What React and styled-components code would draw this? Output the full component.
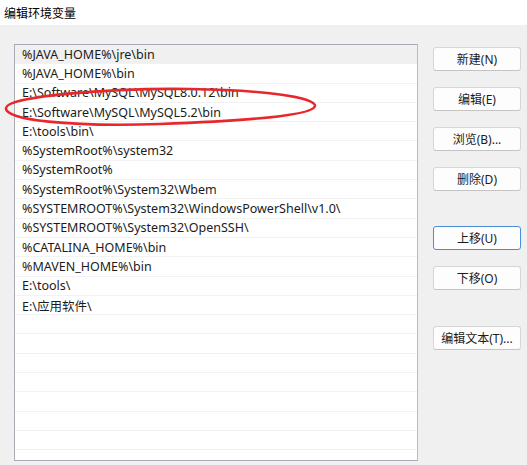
import React from "react";
import styled, { createGlobalStyle } from "styled-components";

const Global = createGlobalStyle`
  html, body { margin: 0; padding: 0; background: #f0f0f0; }
  body { width: 527px; height: 465px; overflow: hidden; font-family: "Noto Sans", "Noto Sans CJK SC", sans-serif; color: #1b1b1b; }
`;

const Window = styled.div`
  position: relative;
  width: 527px;
  height: 465px;
  background: #f0f0f0;
  display: flex;
  flex-direction: column;
`;

const TitleBar = styled.div`
  height: 25px;
  background: #ffffff;
  display: flex;
  align-items: center;
  padding-left: 4px;
  font-size: 12px;
  color: #000;
  font-family: "Noto Sans CJK SC", sans-serif;
`;

const Body = styled.div`
  display: flex;
  padding: 19px 0 0 14px;
  gap: 15px;
`;

const List = styled.div`
  width: 402px;
  height: 415px;
  border: 1px solid #a9adb3;
  border-right-color: #b8bbc0;
  background: #fff;
  overflow: hidden;
`;

const Row = styled.div`
  height: 18.3px;
  border-bottom: 1px solid #f2f2f2;
  background: ${(p) => (p.$active ? "#f0f0f0" : "#fff")};
  display: flex;
  align-items: center;
  padding-left: 7px;
  font-size: 12.5px;
  white-space: nowrap;
  color: #1b1b1b;
`;

const Buttons = styled.div`
  display: flex;
  flex-direction: column;
  width: 88px;
  padding-top: 3px;
`;

const Button = styled.div`
  height: 22px;
  margin-top: ${(p) => p.$gap || 0}px;
  background: #fdfdfd;
  border: 1px solid ${(p) => (p.$focus ? "#4a8fd6" : "#d6d6d6")};
  border-bottom-color: ${(p) => (p.$focus ? "#4a8fd6" : "#c4c4c4")};
  border-radius: 3px;
  display: flex;
  align-items: center;
  justify-content: center;
  font-size: 12px;
  font-family: "Noto Sans", "Noto Sans CJK SC", sans-serif;
  color: #1b1b1b;
`;

const Mark = styled.svg`
  position: absolute;
  left: 0;
  top: 0;
  pointer-events: none;
`;

const items = [
  "%JAVA_HOME%\\jre\\bin",
  "%JAVA_HOME%\\bin",
  "E:\\Software\\MySQL\\MySQL8.0.12\\bin",
  "E:\\Software\\MySQL\\MySQL5.2\\bin",
  "E:\\tools\\bin\\",
  "%SystemRoot%\\system32",
  "%SystemRoot%",
  "%SystemRoot%\\System32\\Wbem",
  "%SYSTEMROOT%\\System32\\WindowsPowerShell\\v1.0\\",
  "%SYSTEMROOT%\\System32\\OpenSSH\\",
  "%CATALINA_HOME%\\bin",
  "%MAVEN_HOME%\\bin",
  "E:\\tools\\",
  "E:\\应用软件\\",
];

const rows = [...items, ...Array(8).fill("")];

const buttons = [
  { label: "新建(N)", gap: 0 },
  { label: "编辑(E)", gap: 16 },
  { label: "浏览(B)...", gap: 16 },
  { label: "删除(D)", gap: 16 },
  { label: "上移(U)", gap: 35, focus: true },
  { label: "下移(O)", gap: 16 },
  { label: "编辑文本(T)...", gap: 36 },
];

export default function App() {
  return (
    <Window>
      <Global />
      <TitleBar>编辑环境变量</TitleBar>
      <Body>
        <List>
          {rows.map((t, i) => (
            <Row key={i} $active={i === 0}>
              {t}
            </Row>
          ))}
        </List>
        <Buttons>
          {buttons.map((b) => (
            <Button key={b.label} $gap={b.gap} $focus={b.focus}>
              {b.label}
            </Button>
          ))}
        </Buttons>
      </Body>
      <Mark width="527" height="465" viewBox="0 0 527 465">
        <path
          d="M 6 108 C 8 96, 110 88, 190 89 C 262 90, 316 97, 315 106 C 313 116, 240 121, 160 124 C 70 127, 4 120, 6 108 Z"
          fill="none"
          stroke="#e8262b"
          strokeWidth="2.6"
        />
      </Mark>
    </Window>
  );
}
